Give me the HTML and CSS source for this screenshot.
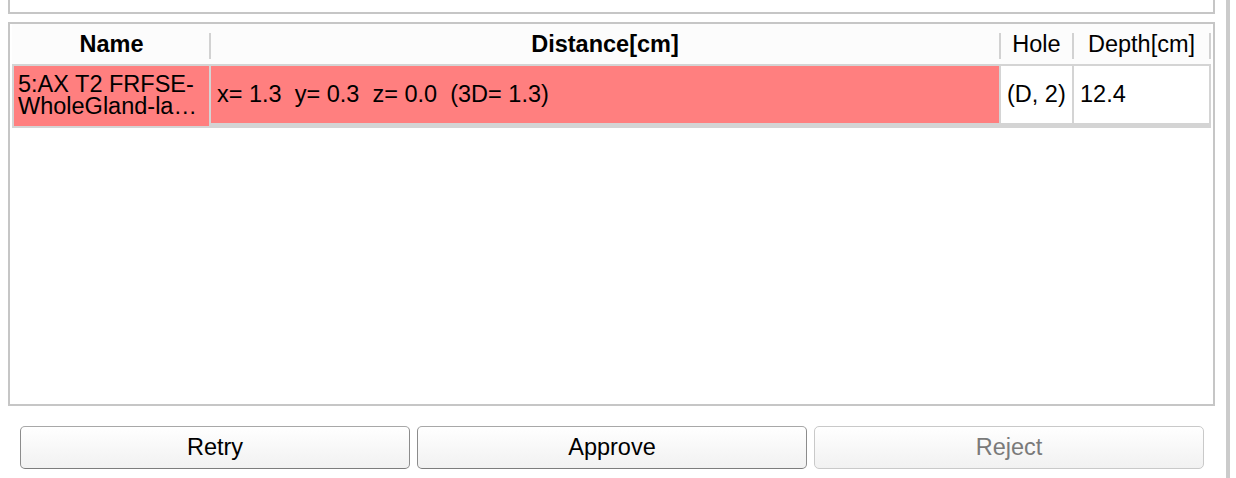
FILE: index.html
```html
<!DOCTYPE html>
<html>
<head>
<meta charset="utf-8">
<link rel="stylesheet" href="styles.css">
</head>
<body>
<div class="window">
  <div class="main">
    <div class="top-panel"></div>
    <div class="table-panel">
      <div class="thead">
        <div class="th bold">Name</div>
        <div class="th bold">Distance[cm]</div>
        <div class="th">Hole</div>
        <div class="th">Depth[cm]</div>
      </div>
      <div class="trow">
        <div class="td name hl">5:AX T2 FRFSE-WholeGland-la…</div>
        <div class="td hl">x= 1.3&nbsp; y= 0.3&nbsp; z= 0.0&nbsp; (3D= 1.3)</div>
        <div class="td">(D, 2)</div>
        <div class="td">12.4</div>
      </div>
    </div>
    <div class="buttons">
      <button class="btn">Retry</button>
      <button class="btn">Approve</button>
      <button class="btn disabled" disabled>Reject</button>
    </div>
  </div>
  <div class="divider"></div>
  <div class="rest"></div>
</div>
</body>
</html>
```
FILE: styles.css
```css
html, body {
  margin: 0;
  padding: 0;
  background: #ffffff;
}
body {
  font-family: "Liberation Sans", Arial, sans-serif;
  font-size: 23.5px;
  color: #000;
}
.window {
  display: flex;
  height: 478px;
  overflow: hidden;
}
.main {
  width: 1226px;
  box-sizing: border-box;
  padding: 0 11px 0 8px;
  display: flex;
  flex-direction: column;
}
.top-panel {
  height: 12px;
  border: 2px solid #c6c6c6;
  border-top: none;
  background: #fff;
  margin-bottom: 8px;
}
.table-panel {
  height: 384px;
  box-sizing: border-box;
  border: 2px solid #c6c6c6;
  background: #fff;
  padding: 0 2px;
}
.thead {
  display: grid;
  grid-template-columns: 197px 790px 73px 137px;
  padding-left: 2px;
  height: 40px;
  background: #fcfcfc;
}
.th {
  display: flex;
  align-items: center;
  justify-content: center;
  padding-right: 2px;
  background: linear-gradient(#d2d2d2, #d2d2d2) no-repeat right 0 top 9px / 2px 26px;
  white-space: nowrap;
}
.bold {
  font-weight: bold;
}
.trow {
  display: grid;
  grid-template-columns: 195px 788px 71px 135px;
  gap: 2px;
  padding: 2px;
  background: #d4d4d4;
}
.td {
  height: 57px;
  background: #fff;
  display: flex;
  align-items: center;
  padding: 0 6px;
  white-space: nowrap;
  overflow: hidden;
}
.td.name {
  padding: 0 4px 3px 4px;
  white-space: normal;
  line-height: 22px;
}
.hl {
  background: #ff7f7f;
}
.buttons {
  display: flex;
  gap: 7px;
  margin-top: 20px;
  padding: 0 11px 0 12px;
}
.btn {
  flex: 1;
  height: 43px;
  border: 1px solid #8c8c8c;
  border-top-color: #a8a8a8;
  border-bottom-color: #7c7c7c;
  border-radius: 5px;
  background: linear-gradient(#ffffff, #f1f1f1);
  font-family: "Liberation Sans", Arial, sans-serif;
  font-size: 23.5px;
  color: #000;
  padding: 0;
}
.btn.disabled {
  border-color: #c9c9c9;
  color: #7a7a7a;
}
.divider {
  width: 4px;
  background: #cbcbcb;
}
.rest {
  flex: 1;
  background: #fff;
}
```
